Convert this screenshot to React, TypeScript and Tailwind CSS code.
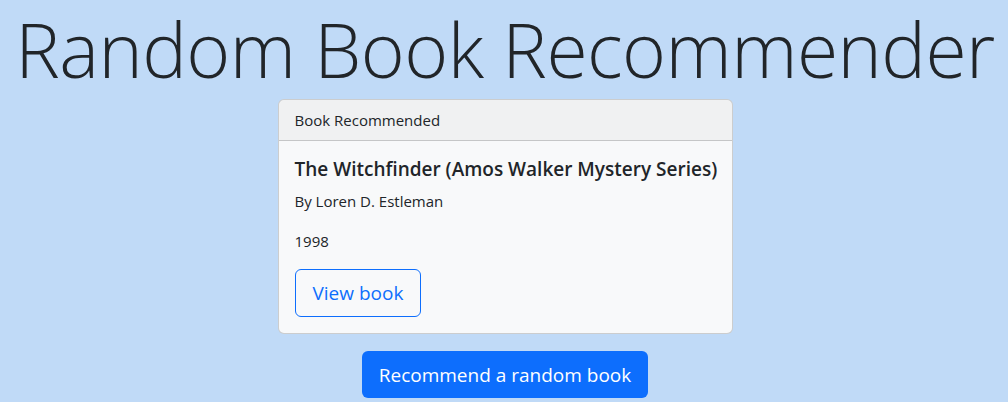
export default function App() {
  return (
    <div className="min-h-[402px] w-full bg-[#c0daf7] text-[#212529] flex flex-col items-center pl-[2px]" style={{ fontFamily: '"Open Sans", "Noto Sans", sans-serif' }}>
      <h1 className="w-full pt-[3px] text-[75px] font-light leading-[93px] tracking-[-0.55px] text-center">Random Book Recommender</h1>
      <div className="mt-[3px] w-[455px] bg-[#f8f9fa] border border-[rgba(0,0,0,0.175)] rounded-[6px] overflow-hidden">
        <div className="px-4 py-2 leading-6 text-[15px] bg-[rgba(0,0,0,0.03)] border-b border-[rgba(0,0,0,0.175)]">Book Recommended</div>
        <div className="p-4">
          <h5 className="text-[19px] font-semibold leading-6 mb-2 whitespace-nowrap">The Witchfinder (Amos Walker Mystery Series)</h5>
          <p className="text-[15px] leading-6 mb-4">By Loren D. Estleman</p>
          <p className="text-[15px] leading-6 mb-4">1998</p>
          <button className="h-12 px-[17px] text-[19px] text-[#0d6efd] border border-[#0d6efd] rounded-[6px] leading-[30px]">View book</button>
        </div>
      </div>
      <button className="mt-[17px] h-[47px] px-[17px] text-[19px] text-white bg-[#0d6efd] rounded-[6px] leading-[30px]">Recommend a random book</button>
    </div>
  );
}
